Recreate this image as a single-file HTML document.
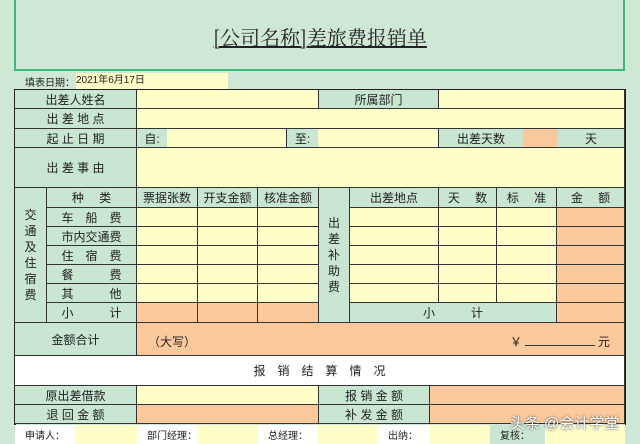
<!DOCTYPE html>
<html><head><meta charset="utf-8"><style>
body{margin:0;width:640px;height:444px;background:#cfe8d6;position:relative;overflow:hidden;font-family:"Liberation Sans","Noto Sans CJK SC",sans-serif;font-size:12px;color:#222}
.c{position:absolute;box-sizing:border-box;display:flex;align-items:center;justify-content:center;border-right:1px solid #333;border-bottom:1px solid #333;white-space:nowrap}
.g{background:#c8e6d2}.y{background:#fffdc8}.o{background:#fcc99c}.w{background:#fff}
.n{border:none}
</style></head><body>
<div style="position:absolute;left:14px;top:0;width:611px;height:71px;border:2px solid #3cb878;border-top:none;box-sizing:border-box"></div>
<div style="position:absolute;left:0;width:640px;top:22px;text-align:center;font-family:'Noto Serif CJK SC','Liberation Serif',serif;font-size:20px;text-decoration:underline">[公司名称]差旅费报销单</div>
<div style="position:absolute;left:25px;top:74px;font-size:10px">填表日期：</div>
<div style="position:absolute;left:76px;top:73px;width:152px;height:16px;background:#fffdc8;font-size:10px;line-height:16px">2021年6月17日</div>
<div style="position:absolute;left:14px;top:89px;width:612px;height:336px;border-top:2px solid #222;border-left:2px solid #222;border-right:1px solid #222;box-sizing:border-box"></div>
<div id="t"></div>
<script>
var D=[
[15,90,137,109,'g','出差人姓名'],[137,90,319,109,'y',''],[319,90,439,109,'g','所属部门'],[439,90,625,109,'y',''],
[15,109,137,129,'g','出 差 地 点'],[137,109,625,129,'y',''],
[15,129,137,148,'g','起 止 日 期'],[137,129,167,148,'g','自:',1],[167,129,287,148,'y',''],[287,129,318,148,'g','至:',1],[318,129,439,148,'y',''],[439,129,523,148,'g','出差天数',1],[523,129,558,148,'o','',1],[558,129,625,148,'g','天'],
[15,148,137,188,'g','出 差 事 由'],[137,148,625,188,'y',''],
[15,188,47,323,'g','交<br>通<br>及<br>住<br>宿<br>费'],
[47,188,137,208,'g','种　 类'],[137,188,198,208,'g','票据张数'],[198,188,258,208,'g','开支金额'],[258,188,319,208,'g','核准金额'],
[319,188,350,323,'g','出<br>差<br>补<br>助<br>费'],
[350,188,439,208,'g','出差地点'],[439,188,497,208,'g','天　 数'],[497,188,557,208,'g','标　 准'],[557,188,625,208,'g','金　 额']];
var L=['车　船　费','市内交通费','住　宿　费','餐　　　费','其　　　他'];
var ys=[208,227,246,265,284,303];
for(var i=0;i<5;i++){var a=ys[i],b=ys[i+1];
D.push([47,a,137,b,'g',L[i]],[137,a,198,b,'y',''],[198,a,258,b,'y',''],[258,a,319,b,'y',''],[350,a,439,b,'y',''],[439,a,497,b,'y',''],[497,a,557,b,'y',''],[557,a,625,b,'o','']);}
D.push([47,303,137,323,'g','小　　　计'],[137,303,198,323,'o',''],[198,303,258,323,'o',''],[258,303,319,323,'o',''],[350,303,557,323,'g','小　　　计'],[557,303,625,323,'o',''],
[15,323,137,356,'g','金额合计'],[137,323,625,356,'o',''],
[15,356,625,386,'w','报　销　结　算　情　况'],
[15,386,137,405,'g','原出差借款'],[137,386,319,405,'y',''],[319,386,430,405,'g','报 销 金 额'],[430,386,625,405,'o',''],
[15,405,137,424,'g','退 回 金 额'],[137,405,319,424,'o',''],[319,405,430,424,'g','补 发 金 额'],[430,405,625,424,'o','']);
var F=[[15,75,'w','申请人：'],[75,137,'y',''],[137,198,'w','部门经理：'],[198,258,'y',''],[258,318,'w','总经理：'],[318,378,'y',''],[378,430,'w','出纳：'],[430,490,'y',''],[490,545,'g','复核：'],[545,625,'y','']];
var h='';
D.forEach(function(d){h+='<div class="c '+d[4]+'" style="left:'+d[0]+'px;top:'+d[1]+'px;width:'+(d[2]-d[0])+'px;height:'+(d[3]-d[1])+'px;'+(d[6]?'border-right:none;':'')+(d[5].indexOf('<br>')>=0?'line-height:16px;text-align:center;':'')+'">'+d[5]+'</div>';});
F.forEach(function(d){h+='<div class="c n '+d[2]+'" style="left:'+d[0]+'px;top:425px;width:'+(d[1]-d[0])+'px;height:19px;font-size:10px;justify-content:flex-start;padding-left:10px">'+d[3]+'</div>';});
h+='<div style="position:absolute;left:148px;top:333px">（大写）</div><div style="position:absolute;left:510px;top:333px">￥<span style="display:inline-block;width:70px;border-bottom:1px solid #333;margin:0 3px"></span>元</div>';
h+='<div style="position:absolute;left:510px;top:412px;font-size:15px;color:#fff;text-shadow:0 0 2px #333">头条 @会计学堂</div>';
document.getElementById('t').innerHTML=h;
</script>
</body></html>
